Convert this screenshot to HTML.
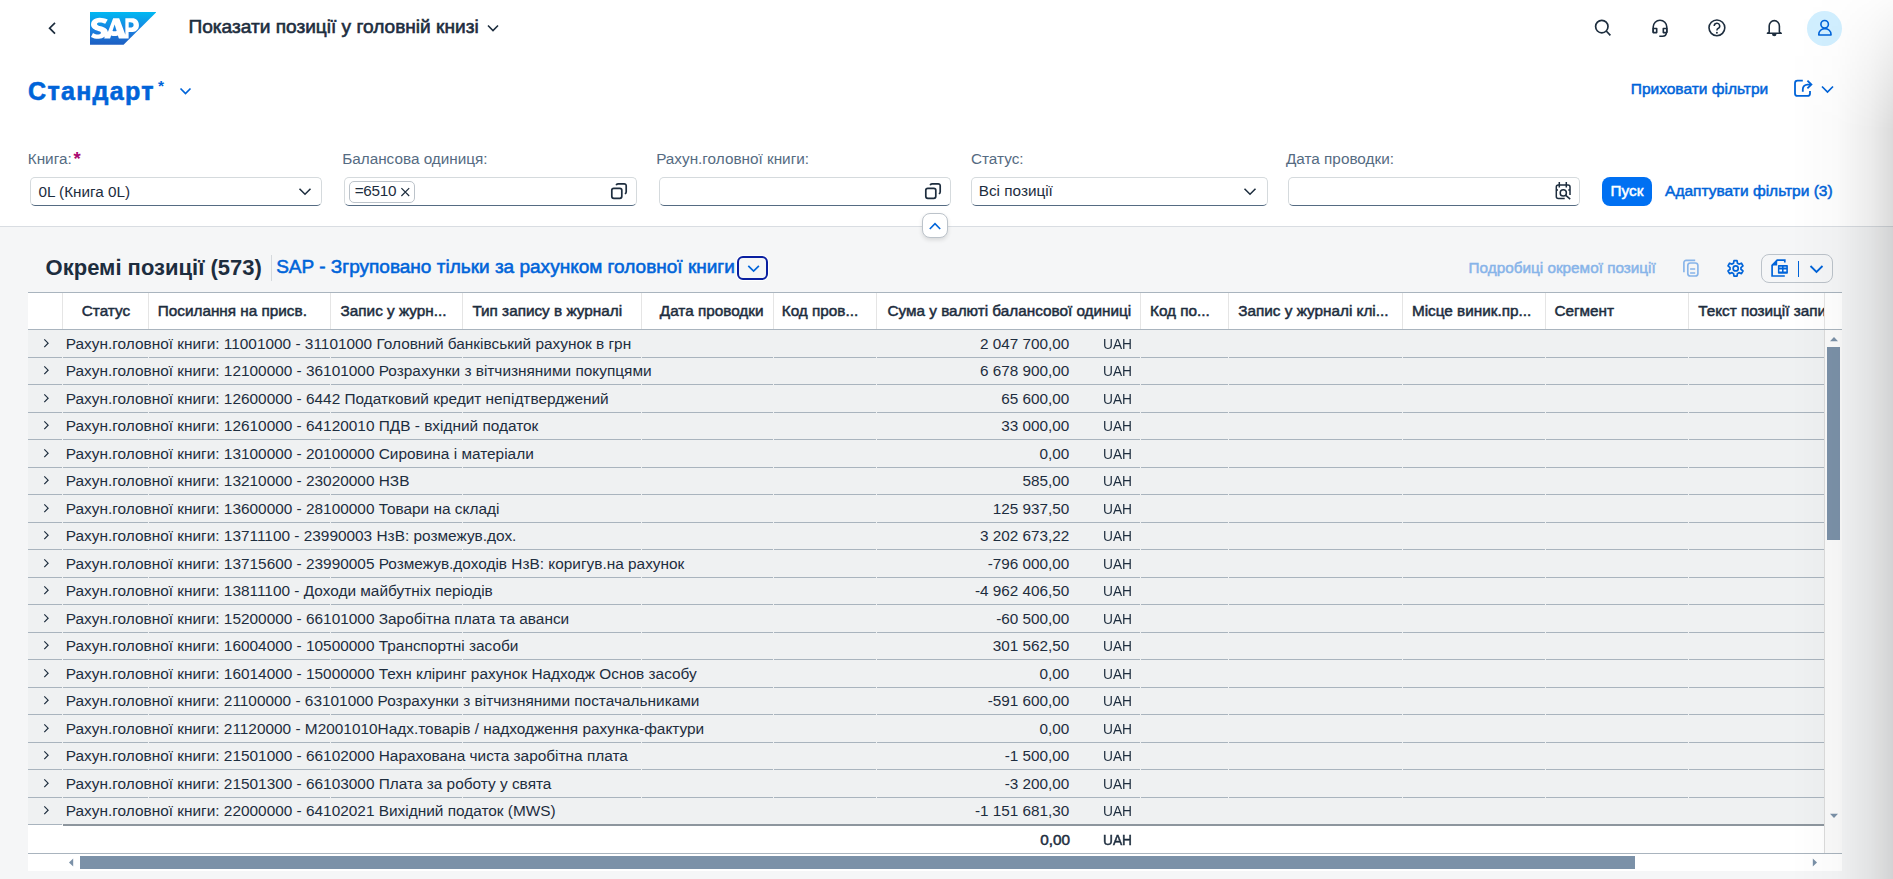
<!DOCTYPE html>
<html><head><meta charset="utf-8"><style>
html,body{margin:0;padding:0;width:1893px;height:879px;overflow:hidden;background:#f5f6f7;font-family:"Liberation Sans",sans-serif;}
.a{position:absolute;}
.t{position:absolute;white-space:nowrap;line-height:1.2;}
.inp{position:absolute;box-sizing:border-box;background:#fff;border:1px solid #d5dadd;border-bottom:1.5px solid #556b82;border-radius:5px;}
#top{position:absolute;left:0;top:0;width:1893px;height:226px;background:#fff;}
</style></head><body>
<div id="top"></div>
<svg class="a" style="left:44px;top:18px" width="16" height="20" viewBox="0 0 16 20"><path d="M11 4.8 L5.6 10.2 L11 15.6" fill="none" stroke="#1d2d3e" stroke-width="1.7"/></svg>
<svg class="a" style="left:90px;top:12px" width="66.4" height="32.7" viewBox="0 0 412.38 204" preserveAspectRatio="none">
<defs><linearGradient id="sg" x1="0" y1="0" x2="0" y2="1"><stop offset="0" stop-color="#00b9f2"/><stop offset="0.55" stop-color="#1a80e0"/><stop offset="1" stop-color="#1d5ec2"/></linearGradient></defs>
<polygon points="0 204 208.41 204 412.38 0 0 0" fill="url(#sg)"/>
<path transform="translate(6 36) scale(1.075 1.067) translate(-5.4 -36.2)" d="M244.73,38.36l-40.6,0v96.53L168.66,38.33H133.5l-30.28,80.73C100,98.76,79,91.69,62.44,86.43,51.5,82.92,39.89,77.75,40,72c.09-4.72,6.22-9.1,18.37-8.45,8.17.44,15.38,1.09,29.7,8l14.1-24.53C89.09,40.370,71,36.21,56.17,36.2h-.09c-17.3,0-31.710,5.6-40.63,14.83A34.23,34.23,0,0,0,5.72,74.7C5.5,86.09,9.67,94.16,18.5,100.66,26,106.15,35.53,109.72,44,112.34c10.43,3.23,18.94,6,18.84,12A8.82,8.82,0,0,1,60.36,130c-2.6,2.68-6.6,3.69-12.12,3.8-10.67.22-18.56-1.45-31.16-8.9L5.41,148.06C18,155.23,31.68,159,47.06,159l3.470,0c13.49-.24,24.4-4.080,33.09-11.14.5-.41,1-.82,1.43-1.25L81.47,157H116l5.81-17.65a63.46,63.46,0,0,0,19.79,3.11,62.41,62.41,0,0,0,19.3-3l5.66,17.56h56.37V120h12.28c29.71,0,47.27-15.11,47.27-40.48C282.46,51.28,265.37,38.36,244.73,38.36ZM141.62,115.48a33.36,33.36,0,0,1-11.86-2.08l12.06-38.07h.23l11.85,38.18A35.28,35.28,0,0,1,141.62,115.48Zm90.16-21.9h-8.39V62.9h8.39c11.17,0,20.09,3.72,20.090,15.1,0,11.78-8.92,15.58-20.09,15.58" fill="#fff" fill-rule="evenodd"/>
</svg>
<div class="t" style="left:188.47px;top:16.46px;font-size:19.1px;font-weight:400;color:#1d2d3e;-webkit-text-stroke:0.6px #1d2d3e;">Показати позиції у головній книзі</div>
<svg class="a" style="left:486px;top:21px" width="14" height="14" viewBox="0 0 14 14"><path d="M2 4.5 L7 9.5 L12 4.5" fill="none" stroke="#1d2d3e" stroke-width="1.6"/></svg>
<svg class="a" style="left:1593px;top:19px" width="20" height="20" viewBox="0 0 20 20"><circle cx="8.8" cy="7.6" r="6.2" fill="none" stroke="#1d2d3e" stroke-width="1.7"/><path d="M13.2 12 L17.4 16.3" stroke="#1d2d3e" stroke-width="1.7"/></svg>
<svg class="a" style="left:1650px;top:17px" width="20" height="22" viewBox="0 0 20 22"><path d="M3.2 15.6 V10 A6.8 6.8 0 0 1 16.8 10 V15.6" fill="none" stroke="#1d2d3e" stroke-width="1.6"/><path d="M3.2 11.5 H6.7 V15.6 H3.2 Z M13.3 11.5 H16.8 V15.6 H13.3 Z" fill="none" stroke="#1d2d3e" stroke-width="1.6" stroke-linejoin="round"/><path d="M16.4 15.8 Q16.2 19.2 12.5 19.3 H9.3" fill="none" stroke="#1d2d3e" stroke-width="1.6"/></svg>
<svg class="a" style="left:1707px;top:18px" width="20" height="20" viewBox="0 0 20 20"><circle cx="9.9" cy="9.85" r="7.9" fill="none" stroke="#1d2d3e" stroke-width="1.6"/><path d="M7.2 8 A2.75 2.75 0 1 1 11 10.5 Q9.9 11 9.9 12.6" fill="none" stroke="#1d2d3e" stroke-width="1.5"/><circle cx="9.9" cy="14.8" r="0.95" fill="#1d2d3e"/></svg>
<svg class="a" style="left:1764px;top:18px" width="21" height="20" viewBox="0 0 21 20"><path d="M5.2 14 V8 A5.1 5.4 0 0 1 15.4 8 V14 L17.2 15.3 H3.4 Z" fill="none" stroke="#1d2d3e" stroke-width="1.6" stroke-linejoin="round"/><path d="M8 15.9 A2.25 2.4 0 0 0 12.5 15.9 Z" fill="#1d2d3e"/></svg>
<div class="a" style="left:1807px;top:11px;width:35px;height:35px;border-radius:50%;background:#d1efff"></div>
<svg class="a" style="left:1814px;top:18px" width="21" height="21" viewBox="0 0 21 21"><circle cx="10.65" cy="6.2" r="3.75" fill="none" stroke="#0064d9" stroke-width="1.6"/><path d="M4.8 17 V16.2 A6.1 5.6 0 0 1 17 16.2 V17 Z" fill="none" stroke="#0064d9" stroke-width="1.6" stroke-linejoin="round"/></svg>
<div class="t" style="left:28.05px;top:75.53px;font-size:25px;font-weight:700;color:#0064d9;-webkit-text-stroke:0.6px #0064d9;letter-spacing:1.3px">Стандарт</div>
<div class="t" style="left:158.00px;top:77.00px;font-size:15.5px;font-weight:700;color:#0064d9;">*</div>
<svg class="a" style="left:178px;top:85px" width="15" height="14" viewBox="0 0 15 14"><path d="M2.5 3.5 L7.5 8.5 L12.5 3.5" fill="none" stroke="#0064d9" stroke-width="1.7"/></svg>
<div class="t" style="left:1630.76px;top:80.20px;font-size:15.5px;font-weight:400;color:#0064d9;-webkit-text-stroke:0.5px #0064d9;">Приховати фільтри</div>
<svg class="a" style="left:1792px;top:79px" width="22" height="19" viewBox="0 0 22 19"><path d="M10.8 1.7 H5.5 A2.5 2.5 0 0 0 3 4.2 V14.4 A2.5 2.5 0 0 0 5.5 16.9 H15.5 A2.5 2.5 0 0 0 18 14.4 V11.9" fill="none" stroke="#0064d9" stroke-width="1.8"/><path d="M10.8 12.8 V10.2 A4.6 4.6 0 0 1 15.4 5.6 H19" fill="none" stroke="#0064d9" stroke-width="1.8"/><path d="M15.4 1.6 L19.4 5.5 L15.4 9.4" fill="none" stroke="#0064d9" stroke-width="1.8"/></svg>
<svg class="a" style="left:1820px;top:83px" width="15" height="14" viewBox="0 0 15 14"><path d="M2 3.5 L7.5 9 L13 3.5" fill="none" stroke="#0064d9" stroke-width="1.7"/></svg>
<div class="t" style="left:27.78px;top:149.79px;font-size:15.3px;font-weight:400;color:#556b82;">Книга:</div>
<div class="t" style="left:342.18px;top:149.79px;font-size:15.3px;font-weight:400;color:#556b82;">Балансова одиниця:</div>
<div class="t" style="left:656.18px;top:149.79px;font-size:15.3px;font-weight:400;color:#556b82;">Рахун.головної книги:</div>
<div class="t" style="left:970.98px;top:149.79px;font-size:15.3px;font-weight:400;color:#556b82;">Статус:</div>
<div class="t" style="left:1285.98px;top:149.79px;font-size:15.3px;font-weight:400;color:#556b82;">Дата проводки:</div>
<div class="t" style="left:73.50px;top:147.83px;font-size:18.5px;font-weight:700;color:#aa0870;">*</div>
<div class="inp" style="left:30px;top:177px;width:292px;height:29px"></div>
<div class="inp" style="left:344px;top:177px;width:293px;height:29px"></div>
<div class="inp" style="left:659px;top:177px;width:292px;height:29px"></div>
<div class="inp" style="left:971px;top:177px;width:297px;height:29px"></div>
<div class="inp" style="left:1288px;top:177px;width:292px;height:29px"></div>
<div class="t" style="left:38.39px;top:182.89px;font-size:15.3px;font-weight:400;color:#1d2d3e;">0L (Книга 0L)</div>
<svg class="a" style="left:297px;top:185px" width="16" height="14" viewBox="0 0 16 14"><path d="M2.5 3.7 L8 9.2 L13.5 3.7" fill="none" stroke="#1d2d3e" stroke-width="1.55"/></svg>
<svg class="a" style="left:1242px;top:185px" width="16" height="14" viewBox="0 0 16 14"><path d="M2.5 3.7 L8 9.2 L13.5 3.7" fill="none" stroke="#1d2d3e" stroke-width="1.55"/></svg>
<div class="t" style="left:978.78px;top:182.39px;font-size:15.3px;font-weight:400;color:#1d2d3e;">Всі позиції</div>
<div class="a" style="left:349.4px;top:181px;width:65.5px;height:22px;border:1px solid #bcc3ca;border-radius:5px;background:#fff;box-sizing:border-box"></div>
<div class="t" style="left:354.74px;top:182.49px;font-size:15.3px;font-weight:400;color:#1d2d3e;letter-spacing:-0.3px">=6510</div>
<svg class="a" style="left:399px;top:186px" width="12" height="12" viewBox="0 0 12 12"><path d="M2.4 2.2 L10.2 10 M10.2 2.2 L2.4 10" stroke="#1d2d3e" stroke-width="1.2"/></svg>
<svg class="a" style="left:610px;top:182px" width="18" height="18" viewBox="0 0 18 18"><rect x="1.8" y="6.3" width="10" height="10" rx="2" fill="none" stroke="#1d2d3e" stroke-width="1.7"/><path d="M6.2 3.2 A2 2 0 0 1 8 1.8 H14.2 A2 2 0 0 1 16.2 3.8 V10 A2 2 0 0 1 14.8 11.8" fill="none" stroke="#1d2d3e" stroke-width="1.7"/></svg>
<svg class="a" style="left:924px;top:182px" width="18" height="18" viewBox="0 0 18 18"><rect x="1.8" y="6.3" width="10" height="10" rx="2" fill="none" stroke="#1d2d3e" stroke-width="1.7"/><path d="M6.2 3.2 A2 2 0 0 1 8 1.8 H14.2 A2 2 0 0 1 16.2 3.8 V10 A2 2 0 0 1 14.8 11.8" fill="none" stroke="#1d2d3e" stroke-width="1.7"/></svg>
<svg class="a" style="left:1553px;top:181px" width="20" height="20" viewBox="0 0 20 20"><path d="M11.7 17.6 H5.3 A2 2 0 0 1 3.3 15.6 V5.9 A2 2 0 0 1 5.3 3.9 H15 A2 2 0 0 1 17 5.9 V13.9" fill="none" stroke="#1d2d3e" stroke-width="1.5"/><path d="M6.3 1 V6.6 M13.3 1 V6.6 M3.3 9 H5 M15.3 9 H17" stroke="#1d2d3e" stroke-width="1.5"/><circle cx="10.3" cy="11.9" r="3.1" fill="none" stroke="#1d2d3e" stroke-width="1.5"/><path d="M12.5 14.1 L17.2 18.1" stroke="#1d2d3e" stroke-width="1.5"/></svg>
<div class="a" style="left:1602px;top:177px;width:50px;height:29px;border-radius:8px;background:#0070f2"></div>
<div class="t" style="left:1610.58px;top:181.89px;font-size:15.3px;font-weight:400;color:#fff;-webkit-text-stroke:0.5px #fff;">Пуск</div>
<div class="t" style="left:1665.09px;top:181.70px;font-size:15.5px;font-weight:400;color:#0064d9;-webkit-text-stroke:0.5px #0064d9;">Адаптувати фільтри (3)</div>
<div class="a" style="left:0px;top:226px;width:1893px;height:1px;background:#d9dde2;"></div>
<div class="a" style="left:922px;top:213px;width:26px;height:25px;border-radius:8px;background:#fff;border:1px solid #bcc3ca;box-sizing:border-box;box-shadow:0 2px 4px rgba(0,0,0,0.12)"></div>
<svg class="a" style="left:927px;top:219px" width="16" height="12" viewBox="0 0 16 12"><path d="M2.8 10 L8 4.6 L13.2 10" fill="none" stroke="#0064d9" stroke-width="1.6"/></svg>
<div class="t" style="left:45.62px;top:255.29px;font-size:22px;font-weight:700;color:#1d2d3e;">Окремі позиції (573)</div>
<div class="a" style="left:271px;top:255px;width:1px;height:26px;background:#d5d9dd;"></div>
<div class="t" style="left:276.15px;top:256.33px;font-size:19.03px;font-weight:400;color:#0064d9;-webkit-text-stroke:0.55px #0064d9;">SAP - Згруповано тільки за рахунком головної книги</div>
<div class="a" style="left:736px;top:255px;width:33px;height:26px;border-radius:7px;border:2px solid #fff;box-sizing:border-box"></div>
<div class="a" style="left:737px;top:256px;width:31px;height:24px;border-radius:6px;border:2px solid #0a1fa0;box-sizing:border-box"></div>
<svg class="a" style="left:745.5px;top:261.5px" width="15" height="14" viewBox="0 0 15 14"><path d="M2.3 3.8 L7.6 9 L12.9 3.8" fill="none" stroke="#0064d9" stroke-width="1.7"/></svg>
<div class="t" style="left:1468.58px;top:258.59px;font-size:15.3px;font-weight:400;color:#87b4e9;-webkit-text-stroke:0.5px #87b4e9;">Подробиці окремої позиції</div>
<svg class="a" style="left:1682px;top:258px" width="19" height="20" viewBox="0 0 19 20"><path d="M1.9 14.2 V4.6 A2.3 2.3 0 0 1 4.2 2.3 H13.2" fill="none" stroke="#87b4e9" stroke-width="1.65"/><rect x="5.8" y="5" width="10.1" height="13" rx="2.6" fill="none" stroke="#87b4e9" stroke-width="1.65"/><path d="M8.1 11 H13.2 M8.1 15 H13.2" stroke="#87b4e9" stroke-width="1.65"/></svg>
<svg class="a" style="left:1726px;top:258px" width="19" height="20" viewBox="0 0 19 20"><path d="M6.75 5.64 L7.53 5.27 L7.99 2.65 L11.01 2.65 L11.47 5.27 L12.25 5.64 L12.96 6.13 L15.46 5.22 L16.97 7.83 L14.93 9.54 L15.00 10.40 L14.93 11.26 L16.97 12.97 L15.46 15.58 L12.96 14.67 L12.25 15.16 L11.47 15.53 L11.01 18.15 L7.99 18.15 L7.53 15.53 L6.75 15.16 L6.04 14.67 L3.54 15.58 L2.03 12.97 L4.07 11.26 L4.00 10.40 L4.07 9.54 L2.03 7.83 L3.54 5.22 L6.04 6.13 Z" fill="none" stroke="#0064d9" stroke-width="1.7" stroke-linejoin="round"/><circle cx="9.7" cy="10.4" r="2.55" fill="none" stroke="#0064d9" stroke-width="1.7"/></svg>
<div class="a" style="left:1761px;top:254px;width:72px;height:29px;border-radius:8px;border:1px solid #bcc3ca;box-sizing:border-box"></div>
<svg class="a" style="left:1770px;top:258px" width="20" height="20" viewBox="0 0 20 20"><path d="M14.8 4.4 V2.1 H7.2 L2.1 7.4 V18 H14.8" fill="none" stroke="#0064d9" stroke-width="1.7"/><path d="M2.1 7.4 L7.2 2.1 V7.4 Z" fill="#0064d9"/><rect x="7.9" y="6.9" width="10" height="8.9" rx="0.8" fill="#0064d9"/><path d="M9.4 8.8 H12 V9.6 H9.4 Z M13.6 8.8 H16.3 V9.6 H13.6 Z M9.4 11.6 H12 V13.4 H9.4 Z M13.6 11.6 H16.3 V13.4 H13.6 Z" fill="#fff"/></svg>
<div class="a" style="left:1797.9px;top:261px;width:1.2px;height:16px;background:#0064d9;"></div>
<svg class="a" style="left:1809px;top:262px" width="15" height="14" viewBox="0 0 15 14"><path d="M1.5 4 L7.5 10 L13.5 4" fill="none" stroke="#0064d9" stroke-width="1.8"/></svg>
<div class="a" style="left:28px;top:292px;width:1814px;height:579px;background:#fff;"></div>
<div class="a" style="left:28px;top:292px;width:1814px;height:1px;background:#a9b4be;"></div>
<div class="a" style="left:28px;top:329px;width:1814px;height:1px;background:#a9b4be;"></div>
<div class="a" style="left:62px;top:293px;width:1px;height:36px;background:#e5e5e5;"></div>
<div class="a" style="left:148px;top:293px;width:1px;height:36px;background:#e5e5e5;"></div>
<div class="a" style="left:330px;top:293px;width:1px;height:36px;background:#e5e5e5;"></div>
<div class="a" style="left:462px;top:293px;width:1px;height:36px;background:#e5e5e5;"></div>
<div class="a" style="left:641px;top:293px;width:1px;height:36px;background:#e5e5e5;"></div>
<div class="a" style="left:773px;top:293px;width:1px;height:36px;background:#e5e5e5;"></div>
<div class="a" style="left:876px;top:293px;width:1px;height:36px;background:#e5e5e5;"></div>
<div class="a" style="left:1140px;top:293px;width:1px;height:36px;background:#e5e5e5;"></div>
<div class="a" style="left:1228px;top:293px;width:1px;height:36px;background:#e5e5e5;"></div>
<div class="a" style="left:1402px;top:293px;width:1px;height:36px;background:#e5e5e5;"></div>
<div class="a" style="left:1545px;top:293px;width:1px;height:36px;background:#e5e5e5;"></div>
<div class="a" style="left:1688px;top:293px;width:1px;height:36px;background:#e5e5e5;"></div>
<div class="a" style="left:1824px;top:293px;width:1px;height:36px;background:#e5e5e5;"></div>
<div class="a" style="left:0;top:0;width:1893px;height:879px;clip-path:inset(293px 69px 550px 0)">
<div class="t" style="left:81.78px;top:302.19px;font-size:15.3px;font-weight:400;color:#1d2d3e;-webkit-text-stroke:0.5px #1d2d3e;">Статус</div>
<div class="t" style="left:157.78px;top:302.19px;font-size:15.3px;font-weight:400;color:#1d2d3e;-webkit-text-stroke:0.5px #1d2d3e;">Посилання на присв.</div>
<div class="t" style="left:340.58px;top:302.19px;font-size:15.3px;font-weight:400;color:#1d2d3e;-webkit-text-stroke:0.5px #1d2d3e;">Запис у журн...</div>
<div class="t" style="left:472.38px;top:302.19px;font-size:15.3px;font-weight:400;color:#1d2d3e;-webkit-text-stroke:0.5px #1d2d3e;">Тип запису в журналі</div>
<div class="t" style="left:659.78px;top:302.19px;font-size:15.3px;font-weight:400;color:#1d2d3e;-webkit-text-stroke:0.5px #1d2d3e;">Дата проводки</div>
<div class="t" style="left:781.78px;top:302.19px;font-size:15.3px;font-weight:400;color:#1d2d3e;-webkit-text-stroke:0.5px #1d2d3e;">Код пров...</div>
<div class="t" style="left:887.48px;top:302.19px;font-size:15.3px;font-weight:400;color:#1d2d3e;-webkit-text-stroke:0.5px #1d2d3e;">Сума у валюті балансової одиниці</div>
<div class="t" style="left:1149.98px;top:302.19px;font-size:15.3px;font-weight:400;color:#1d2d3e;-webkit-text-stroke:0.5px #1d2d3e;">Код по...</div>
<div class="t" style="left:1238.28px;top:302.19px;font-size:15.3px;font-weight:400;color:#1d2d3e;-webkit-text-stroke:0.5px #1d2d3e;">Запис у журналі клі...</div>
<div class="t" style="left:1411.98px;top:302.19px;font-size:15.3px;font-weight:400;color:#1d2d3e;-webkit-text-stroke:0.5px #1d2d3e;">Місце виник.пр...</div>
<div class="t" style="left:1554.38px;top:302.19px;font-size:15.3px;font-weight:400;color:#1d2d3e;-webkit-text-stroke:0.5px #1d2d3e;">Сегмент</div>
<div class="t" style="left:1698.18px;top:302.19px;font-size:15.3px;font-weight:400;color:#1d2d3e;-webkit-text-stroke:0.5px #1d2d3e;">Текст позиції записів</div>
</div>
<div class="a" style="left:0;top:0;width:1893px;height:879px;clip-path:inset(0 69px 0 0)">
<div class="a" style="left:28px;top:330.10px;width:1796px;height:27.52px;background:#eff1f2;"></div>
<div class="a" style="left:28px;top:356.52px;width:34px;height:1px;background:#a9b4be;"></div>
<div class="a" style="left:63px;top:356.52px;width:85px;height:1px;background:#a9b4be;"></div>
<div class="a" style="left:149px;top:356.52px;width:181px;height:1px;background:#a9b4be;"></div>
<div class="a" style="left:331px;top:356.52px;width:131px;height:1px;background:#a9b4be;"></div>
<div class="a" style="left:463px;top:356.52px;width:178px;height:1px;background:#a9b4be;"></div>
<div class="a" style="left:642px;top:356.52px;width:131px;height:1px;background:#a9b4be;"></div>
<div class="a" style="left:774px;top:356.52px;width:102px;height:1px;background:#a9b4be;"></div>
<div class="a" style="left:877px;top:356.52px;width:263px;height:1px;background:#a9b4be;"></div>
<div class="a" style="left:1141px;top:356.52px;width:87px;height:1px;background:#a9b4be;"></div>
<div class="a" style="left:1229px;top:356.52px;width:173px;height:1px;background:#a9b4be;"></div>
<div class="a" style="left:1403px;top:356.52px;width:142px;height:1px;background:#a9b4be;"></div>
<div class="a" style="left:1546px;top:356.52px;width:142px;height:1px;background:#a9b4be;"></div>
<div class="a" style="left:1689px;top:356.52px;width:135px;height:1px;background:#a9b4be;"></div>
<svg class="a" style="left:40px;top:335.60px" width="12" height="16" viewBox="0 0 12 16"><path d="M4.3 3.3 L8.1 7.2 L4.3 11.1" fill="none" stroke="#1d2d3e" stroke-width="1.2"/></svg>
<div class="t" style="left:65.77px;top:334.69px;font-size:15.4px;font-weight:400;color:#1d2d3e;">Рахун.головної книги: 11001000 - 31101000 Головний банківський рахунок в грн</div>
<div class="t" style="right:823.70px;top:334.79px;font-size:15.3px;font-weight:400;color:#1d2d3e;">2 047 700,00</div>
<div class="t" style="left:1103.09px;top:334.79px;font-size:15.3px;font-weight:400;color:#1d2d3e;"><span style="display:inline-block;transform:scaleX(0.9);transform-origin:0 0">UAH</span></div>
<div class="a" style="left:28px;top:357.62px;width:1796px;height:27.52px;background:#eff1f2;"></div>
<div class="a" style="left:28px;top:384.04px;width:34px;height:1px;background:#a9b4be;"></div>
<div class="a" style="left:63px;top:384.04px;width:85px;height:1px;background:#a9b4be;"></div>
<div class="a" style="left:149px;top:384.04px;width:181px;height:1px;background:#a9b4be;"></div>
<div class="a" style="left:331px;top:384.04px;width:131px;height:1px;background:#a9b4be;"></div>
<div class="a" style="left:463px;top:384.04px;width:178px;height:1px;background:#a9b4be;"></div>
<div class="a" style="left:642px;top:384.04px;width:131px;height:1px;background:#a9b4be;"></div>
<div class="a" style="left:774px;top:384.04px;width:102px;height:1px;background:#a9b4be;"></div>
<div class="a" style="left:877px;top:384.04px;width:263px;height:1px;background:#a9b4be;"></div>
<div class="a" style="left:1141px;top:384.04px;width:87px;height:1px;background:#a9b4be;"></div>
<div class="a" style="left:1229px;top:384.04px;width:173px;height:1px;background:#a9b4be;"></div>
<div class="a" style="left:1403px;top:384.04px;width:142px;height:1px;background:#a9b4be;"></div>
<div class="a" style="left:1546px;top:384.04px;width:142px;height:1px;background:#a9b4be;"></div>
<div class="a" style="left:1689px;top:384.04px;width:135px;height:1px;background:#a9b4be;"></div>
<svg class="a" style="left:40px;top:363.12px" width="12" height="16" viewBox="0 0 12 16"><path d="M4.3 3.3 L8.1 7.2 L4.3 11.1" fill="none" stroke="#1d2d3e" stroke-width="1.2"/></svg>
<div class="t" style="left:65.77px;top:362.18px;font-size:15.4px;font-weight:400;color:#1d2d3e;">Рахун.головної книги: 12100000 - 36101000 Розрахунки з вітчизняними покупцями</div>
<div class="t" style="right:823.70px;top:362.28px;font-size:15.3px;font-weight:400;color:#1d2d3e;">6 678 900,00</div>
<div class="t" style="left:1103.09px;top:362.28px;font-size:15.3px;font-weight:400;color:#1d2d3e;"><span style="display:inline-block;transform:scaleX(0.9);transform-origin:0 0">UAH</span></div>
<div class="a" style="left:28px;top:385.14px;width:1796px;height:27.52px;background:#eff1f2;"></div>
<div class="a" style="left:28px;top:411.56px;width:34px;height:1px;background:#a9b4be;"></div>
<div class="a" style="left:63px;top:411.56px;width:85px;height:1px;background:#a9b4be;"></div>
<div class="a" style="left:149px;top:411.56px;width:181px;height:1px;background:#a9b4be;"></div>
<div class="a" style="left:331px;top:411.56px;width:131px;height:1px;background:#a9b4be;"></div>
<div class="a" style="left:463px;top:411.56px;width:178px;height:1px;background:#a9b4be;"></div>
<div class="a" style="left:642px;top:411.56px;width:131px;height:1px;background:#a9b4be;"></div>
<div class="a" style="left:774px;top:411.56px;width:102px;height:1px;background:#a9b4be;"></div>
<div class="a" style="left:877px;top:411.56px;width:263px;height:1px;background:#a9b4be;"></div>
<div class="a" style="left:1141px;top:411.56px;width:87px;height:1px;background:#a9b4be;"></div>
<div class="a" style="left:1229px;top:411.56px;width:173px;height:1px;background:#a9b4be;"></div>
<div class="a" style="left:1403px;top:411.56px;width:142px;height:1px;background:#a9b4be;"></div>
<div class="a" style="left:1546px;top:411.56px;width:142px;height:1px;background:#a9b4be;"></div>
<div class="a" style="left:1689px;top:411.56px;width:135px;height:1px;background:#a9b4be;"></div>
<svg class="a" style="left:40px;top:390.64px" width="12" height="16" viewBox="0 0 12 16"><path d="M4.3 3.3 L8.1 7.2 L4.3 11.1" fill="none" stroke="#1d2d3e" stroke-width="1.2"/></svg>
<div class="t" style="left:65.77px;top:389.67px;font-size:15.4px;font-weight:400;color:#1d2d3e;">Рахун.головної книги: 12600000 - 6442 Податковий кредит непідтверджений</div>
<div class="t" style="right:823.70px;top:389.77px;font-size:15.3px;font-weight:400;color:#1d2d3e;">65 600,00</div>
<div class="t" style="left:1103.09px;top:389.77px;font-size:15.3px;font-weight:400;color:#1d2d3e;"><span style="display:inline-block;transform:scaleX(0.9);transform-origin:0 0">UAH</span></div>
<div class="a" style="left:28px;top:412.66px;width:1796px;height:27.52px;background:#eff1f2;"></div>
<div class="a" style="left:28px;top:439.08px;width:34px;height:1px;background:#a9b4be;"></div>
<div class="a" style="left:63px;top:439.08px;width:85px;height:1px;background:#a9b4be;"></div>
<div class="a" style="left:149px;top:439.08px;width:181px;height:1px;background:#a9b4be;"></div>
<div class="a" style="left:331px;top:439.08px;width:131px;height:1px;background:#a9b4be;"></div>
<div class="a" style="left:463px;top:439.08px;width:178px;height:1px;background:#a9b4be;"></div>
<div class="a" style="left:642px;top:439.08px;width:131px;height:1px;background:#a9b4be;"></div>
<div class="a" style="left:774px;top:439.08px;width:102px;height:1px;background:#a9b4be;"></div>
<div class="a" style="left:877px;top:439.08px;width:263px;height:1px;background:#a9b4be;"></div>
<div class="a" style="left:1141px;top:439.08px;width:87px;height:1px;background:#a9b4be;"></div>
<div class="a" style="left:1229px;top:439.08px;width:173px;height:1px;background:#a9b4be;"></div>
<div class="a" style="left:1403px;top:439.08px;width:142px;height:1px;background:#a9b4be;"></div>
<div class="a" style="left:1546px;top:439.08px;width:142px;height:1px;background:#a9b4be;"></div>
<div class="a" style="left:1689px;top:439.08px;width:135px;height:1px;background:#a9b4be;"></div>
<svg class="a" style="left:40px;top:418.16px" width="12" height="16" viewBox="0 0 12 16"><path d="M4.3 3.3 L8.1 7.2 L4.3 11.1" fill="none" stroke="#1d2d3e" stroke-width="1.2"/></svg>
<div class="t" style="left:65.77px;top:417.16px;font-size:15.4px;font-weight:400;color:#1d2d3e;">Рахун.головної книги: 12610000 - 64120010 ПДВ - вхідний податок</div>
<div class="t" style="right:823.70px;top:417.26px;font-size:15.3px;font-weight:400;color:#1d2d3e;">33 000,00</div>
<div class="t" style="left:1103.09px;top:417.26px;font-size:15.3px;font-weight:400;color:#1d2d3e;"><span style="display:inline-block;transform:scaleX(0.9);transform-origin:0 0">UAH</span></div>
<div class="a" style="left:28px;top:440.18px;width:1796px;height:27.52px;background:#eff1f2;"></div>
<div class="a" style="left:28px;top:466.60px;width:34px;height:1px;background:#a9b4be;"></div>
<div class="a" style="left:63px;top:466.60px;width:85px;height:1px;background:#a9b4be;"></div>
<div class="a" style="left:149px;top:466.60px;width:181px;height:1px;background:#a9b4be;"></div>
<div class="a" style="left:331px;top:466.60px;width:131px;height:1px;background:#a9b4be;"></div>
<div class="a" style="left:463px;top:466.60px;width:178px;height:1px;background:#a9b4be;"></div>
<div class="a" style="left:642px;top:466.60px;width:131px;height:1px;background:#a9b4be;"></div>
<div class="a" style="left:774px;top:466.60px;width:102px;height:1px;background:#a9b4be;"></div>
<div class="a" style="left:877px;top:466.60px;width:263px;height:1px;background:#a9b4be;"></div>
<div class="a" style="left:1141px;top:466.60px;width:87px;height:1px;background:#a9b4be;"></div>
<div class="a" style="left:1229px;top:466.60px;width:173px;height:1px;background:#a9b4be;"></div>
<div class="a" style="left:1403px;top:466.60px;width:142px;height:1px;background:#a9b4be;"></div>
<div class="a" style="left:1546px;top:466.60px;width:142px;height:1px;background:#a9b4be;"></div>
<div class="a" style="left:1689px;top:466.60px;width:135px;height:1px;background:#a9b4be;"></div>
<svg class="a" style="left:40px;top:445.68px" width="12" height="16" viewBox="0 0 12 16"><path d="M4.3 3.3 L8.1 7.2 L4.3 11.1" fill="none" stroke="#1d2d3e" stroke-width="1.2"/></svg>
<div class="t" style="left:65.77px;top:444.65px;font-size:15.4px;font-weight:400;color:#1d2d3e;">Рахун.головної книги: 13100000 - 20100000 Сировина і матеріали</div>
<div class="t" style="right:823.70px;top:444.75px;font-size:15.3px;font-weight:400;color:#1d2d3e;">0,00</div>
<div class="t" style="left:1103.09px;top:444.75px;font-size:15.3px;font-weight:400;color:#1d2d3e;"><span style="display:inline-block;transform:scaleX(0.9);transform-origin:0 0">UAH</span></div>
<div class="a" style="left:28px;top:467.70px;width:1796px;height:27.52px;background:#eff1f2;"></div>
<div class="a" style="left:28px;top:494.12px;width:34px;height:1px;background:#a9b4be;"></div>
<div class="a" style="left:63px;top:494.12px;width:85px;height:1px;background:#a9b4be;"></div>
<div class="a" style="left:149px;top:494.12px;width:181px;height:1px;background:#a9b4be;"></div>
<div class="a" style="left:331px;top:494.12px;width:131px;height:1px;background:#a9b4be;"></div>
<div class="a" style="left:463px;top:494.12px;width:178px;height:1px;background:#a9b4be;"></div>
<div class="a" style="left:642px;top:494.12px;width:131px;height:1px;background:#a9b4be;"></div>
<div class="a" style="left:774px;top:494.12px;width:102px;height:1px;background:#a9b4be;"></div>
<div class="a" style="left:877px;top:494.12px;width:263px;height:1px;background:#a9b4be;"></div>
<div class="a" style="left:1141px;top:494.12px;width:87px;height:1px;background:#a9b4be;"></div>
<div class="a" style="left:1229px;top:494.12px;width:173px;height:1px;background:#a9b4be;"></div>
<div class="a" style="left:1403px;top:494.12px;width:142px;height:1px;background:#a9b4be;"></div>
<div class="a" style="left:1546px;top:494.12px;width:142px;height:1px;background:#a9b4be;"></div>
<div class="a" style="left:1689px;top:494.12px;width:135px;height:1px;background:#a9b4be;"></div>
<svg class="a" style="left:40px;top:473.20px" width="12" height="16" viewBox="0 0 12 16"><path d="M4.3 3.3 L8.1 7.2 L4.3 11.1" fill="none" stroke="#1d2d3e" stroke-width="1.2"/></svg>
<div class="t" style="left:65.77px;top:472.14px;font-size:15.4px;font-weight:400;color:#1d2d3e;">Рахун.головної книги: 13210000 - 23020000 НЗВ</div>
<div class="t" style="right:823.70px;top:472.24px;font-size:15.3px;font-weight:400;color:#1d2d3e;">585,00</div>
<div class="t" style="left:1103.09px;top:472.24px;font-size:15.3px;font-weight:400;color:#1d2d3e;"><span style="display:inline-block;transform:scaleX(0.9);transform-origin:0 0">UAH</span></div>
<div class="a" style="left:28px;top:495.22px;width:1796px;height:27.52px;background:#eff1f2;"></div>
<div class="a" style="left:28px;top:521.64px;width:34px;height:1px;background:#a9b4be;"></div>
<div class="a" style="left:63px;top:521.64px;width:85px;height:1px;background:#a9b4be;"></div>
<div class="a" style="left:149px;top:521.64px;width:181px;height:1px;background:#a9b4be;"></div>
<div class="a" style="left:331px;top:521.64px;width:131px;height:1px;background:#a9b4be;"></div>
<div class="a" style="left:463px;top:521.64px;width:178px;height:1px;background:#a9b4be;"></div>
<div class="a" style="left:642px;top:521.64px;width:131px;height:1px;background:#a9b4be;"></div>
<div class="a" style="left:774px;top:521.64px;width:102px;height:1px;background:#a9b4be;"></div>
<div class="a" style="left:877px;top:521.64px;width:263px;height:1px;background:#a9b4be;"></div>
<div class="a" style="left:1141px;top:521.64px;width:87px;height:1px;background:#a9b4be;"></div>
<div class="a" style="left:1229px;top:521.64px;width:173px;height:1px;background:#a9b4be;"></div>
<div class="a" style="left:1403px;top:521.64px;width:142px;height:1px;background:#a9b4be;"></div>
<div class="a" style="left:1546px;top:521.64px;width:142px;height:1px;background:#a9b4be;"></div>
<div class="a" style="left:1689px;top:521.64px;width:135px;height:1px;background:#a9b4be;"></div>
<svg class="a" style="left:40px;top:500.72px" width="12" height="16" viewBox="0 0 12 16"><path d="M4.3 3.3 L8.1 7.2 L4.3 11.1" fill="none" stroke="#1d2d3e" stroke-width="1.2"/></svg>
<div class="t" style="left:65.77px;top:499.63px;font-size:15.4px;font-weight:400;color:#1d2d3e;">Рахун.головної книги: 13600000 - 28100000 Товари на складі</div>
<div class="t" style="right:823.70px;top:499.73px;font-size:15.3px;font-weight:400;color:#1d2d3e;">125 937,50</div>
<div class="t" style="left:1103.09px;top:499.73px;font-size:15.3px;font-weight:400;color:#1d2d3e;"><span style="display:inline-block;transform:scaleX(0.9);transform-origin:0 0">UAH</span></div>
<div class="a" style="left:28px;top:522.74px;width:1796px;height:27.52px;background:#eff1f2;"></div>
<div class="a" style="left:28px;top:549.16px;width:34px;height:1px;background:#a9b4be;"></div>
<div class="a" style="left:63px;top:549.16px;width:85px;height:1px;background:#a9b4be;"></div>
<div class="a" style="left:149px;top:549.16px;width:181px;height:1px;background:#a9b4be;"></div>
<div class="a" style="left:331px;top:549.16px;width:131px;height:1px;background:#a9b4be;"></div>
<div class="a" style="left:463px;top:549.16px;width:178px;height:1px;background:#a9b4be;"></div>
<div class="a" style="left:642px;top:549.16px;width:131px;height:1px;background:#a9b4be;"></div>
<div class="a" style="left:774px;top:549.16px;width:102px;height:1px;background:#a9b4be;"></div>
<div class="a" style="left:877px;top:549.16px;width:263px;height:1px;background:#a9b4be;"></div>
<div class="a" style="left:1141px;top:549.16px;width:87px;height:1px;background:#a9b4be;"></div>
<div class="a" style="left:1229px;top:549.16px;width:173px;height:1px;background:#a9b4be;"></div>
<div class="a" style="left:1403px;top:549.16px;width:142px;height:1px;background:#a9b4be;"></div>
<div class="a" style="left:1546px;top:549.16px;width:142px;height:1px;background:#a9b4be;"></div>
<div class="a" style="left:1689px;top:549.16px;width:135px;height:1px;background:#a9b4be;"></div>
<svg class="a" style="left:40px;top:528.24px" width="12" height="16" viewBox="0 0 12 16"><path d="M4.3 3.3 L8.1 7.2 L4.3 11.1" fill="none" stroke="#1d2d3e" stroke-width="1.2"/></svg>
<div class="t" style="left:65.77px;top:527.12px;font-size:15.4px;font-weight:400;color:#1d2d3e;">Рахун.головної книги: 13711100 - 23990003 НзВ: розмежув.дох.</div>
<div class="t" style="right:823.70px;top:527.22px;font-size:15.3px;font-weight:400;color:#1d2d3e;">3 202 673,22</div>
<div class="t" style="left:1103.09px;top:527.22px;font-size:15.3px;font-weight:400;color:#1d2d3e;"><span style="display:inline-block;transform:scaleX(0.9);transform-origin:0 0">UAH</span></div>
<div class="a" style="left:28px;top:550.26px;width:1796px;height:27.52px;background:#eff1f2;"></div>
<div class="a" style="left:28px;top:576.68px;width:34px;height:1px;background:#a9b4be;"></div>
<div class="a" style="left:63px;top:576.68px;width:85px;height:1px;background:#a9b4be;"></div>
<div class="a" style="left:149px;top:576.68px;width:181px;height:1px;background:#a9b4be;"></div>
<div class="a" style="left:331px;top:576.68px;width:131px;height:1px;background:#a9b4be;"></div>
<div class="a" style="left:463px;top:576.68px;width:178px;height:1px;background:#a9b4be;"></div>
<div class="a" style="left:642px;top:576.68px;width:131px;height:1px;background:#a9b4be;"></div>
<div class="a" style="left:774px;top:576.68px;width:102px;height:1px;background:#a9b4be;"></div>
<div class="a" style="left:877px;top:576.68px;width:263px;height:1px;background:#a9b4be;"></div>
<div class="a" style="left:1141px;top:576.68px;width:87px;height:1px;background:#a9b4be;"></div>
<div class="a" style="left:1229px;top:576.68px;width:173px;height:1px;background:#a9b4be;"></div>
<div class="a" style="left:1403px;top:576.68px;width:142px;height:1px;background:#a9b4be;"></div>
<div class="a" style="left:1546px;top:576.68px;width:142px;height:1px;background:#a9b4be;"></div>
<div class="a" style="left:1689px;top:576.68px;width:135px;height:1px;background:#a9b4be;"></div>
<svg class="a" style="left:40px;top:555.76px" width="12" height="16" viewBox="0 0 12 16"><path d="M4.3 3.3 L8.1 7.2 L4.3 11.1" fill="none" stroke="#1d2d3e" stroke-width="1.2"/></svg>
<div class="t" style="left:65.77px;top:554.61px;font-size:15.4px;font-weight:400;color:#1d2d3e;">Рахун.головної книги: 13715600 - 23990005 Розмежув.доходів НзВ: коригув.на рахунок</div>
<div class="t" style="right:823.70px;top:554.71px;font-size:15.3px;font-weight:400;color:#1d2d3e;">-796 000,00</div>
<div class="t" style="left:1103.09px;top:554.71px;font-size:15.3px;font-weight:400;color:#1d2d3e;"><span style="display:inline-block;transform:scaleX(0.9);transform-origin:0 0">UAH</span></div>
<div class="a" style="left:28px;top:577.78px;width:1796px;height:27.52px;background:#eff1f2;"></div>
<div class="a" style="left:28px;top:604.20px;width:34px;height:1px;background:#a9b4be;"></div>
<div class="a" style="left:63px;top:604.20px;width:85px;height:1px;background:#a9b4be;"></div>
<div class="a" style="left:149px;top:604.20px;width:181px;height:1px;background:#a9b4be;"></div>
<div class="a" style="left:331px;top:604.20px;width:131px;height:1px;background:#a9b4be;"></div>
<div class="a" style="left:463px;top:604.20px;width:178px;height:1px;background:#a9b4be;"></div>
<div class="a" style="left:642px;top:604.20px;width:131px;height:1px;background:#a9b4be;"></div>
<div class="a" style="left:774px;top:604.20px;width:102px;height:1px;background:#a9b4be;"></div>
<div class="a" style="left:877px;top:604.20px;width:263px;height:1px;background:#a9b4be;"></div>
<div class="a" style="left:1141px;top:604.20px;width:87px;height:1px;background:#a9b4be;"></div>
<div class="a" style="left:1229px;top:604.20px;width:173px;height:1px;background:#a9b4be;"></div>
<div class="a" style="left:1403px;top:604.20px;width:142px;height:1px;background:#a9b4be;"></div>
<div class="a" style="left:1546px;top:604.20px;width:142px;height:1px;background:#a9b4be;"></div>
<div class="a" style="left:1689px;top:604.20px;width:135px;height:1px;background:#a9b4be;"></div>
<svg class="a" style="left:40px;top:583.28px" width="12" height="16" viewBox="0 0 12 16"><path d="M4.3 3.3 L8.1 7.2 L4.3 11.1" fill="none" stroke="#1d2d3e" stroke-width="1.2"/></svg>
<div class="t" style="left:65.77px;top:582.10px;font-size:15.4px;font-weight:400;color:#1d2d3e;">Рахун.головної книги: 13811100 - Доходи майбутніх періодів</div>
<div class="t" style="right:823.70px;top:582.20px;font-size:15.3px;font-weight:400;color:#1d2d3e;">-4 962 406,50</div>
<div class="t" style="left:1103.09px;top:582.20px;font-size:15.3px;font-weight:400;color:#1d2d3e;"><span style="display:inline-block;transform:scaleX(0.9);transform-origin:0 0">UAH</span></div>
<div class="a" style="left:28px;top:605.30px;width:1796px;height:27.52px;background:#eff1f2;"></div>
<div class="a" style="left:28px;top:631.72px;width:34px;height:1px;background:#a9b4be;"></div>
<div class="a" style="left:63px;top:631.72px;width:85px;height:1px;background:#a9b4be;"></div>
<div class="a" style="left:149px;top:631.72px;width:181px;height:1px;background:#a9b4be;"></div>
<div class="a" style="left:331px;top:631.72px;width:131px;height:1px;background:#a9b4be;"></div>
<div class="a" style="left:463px;top:631.72px;width:178px;height:1px;background:#a9b4be;"></div>
<div class="a" style="left:642px;top:631.72px;width:131px;height:1px;background:#a9b4be;"></div>
<div class="a" style="left:774px;top:631.72px;width:102px;height:1px;background:#a9b4be;"></div>
<div class="a" style="left:877px;top:631.72px;width:263px;height:1px;background:#a9b4be;"></div>
<div class="a" style="left:1141px;top:631.72px;width:87px;height:1px;background:#a9b4be;"></div>
<div class="a" style="left:1229px;top:631.72px;width:173px;height:1px;background:#a9b4be;"></div>
<div class="a" style="left:1403px;top:631.72px;width:142px;height:1px;background:#a9b4be;"></div>
<div class="a" style="left:1546px;top:631.72px;width:142px;height:1px;background:#a9b4be;"></div>
<div class="a" style="left:1689px;top:631.72px;width:135px;height:1px;background:#a9b4be;"></div>
<svg class="a" style="left:40px;top:610.80px" width="12" height="16" viewBox="0 0 12 16"><path d="M4.3 3.3 L8.1 7.2 L4.3 11.1" fill="none" stroke="#1d2d3e" stroke-width="1.2"/></svg>
<div class="t" style="left:65.77px;top:609.59px;font-size:15.4px;font-weight:400;color:#1d2d3e;">Рахун.головної книги: 15200000 - 66101000 Заробітна плата та аванси</div>
<div class="t" style="right:823.70px;top:609.69px;font-size:15.3px;font-weight:400;color:#1d2d3e;">-60 500,00</div>
<div class="t" style="left:1103.09px;top:609.69px;font-size:15.3px;font-weight:400;color:#1d2d3e;"><span style="display:inline-block;transform:scaleX(0.9);transform-origin:0 0">UAH</span></div>
<div class="a" style="left:28px;top:632.82px;width:1796px;height:27.52px;background:#eff1f2;"></div>
<div class="a" style="left:28px;top:659.24px;width:34px;height:1px;background:#a9b4be;"></div>
<div class="a" style="left:63px;top:659.24px;width:85px;height:1px;background:#a9b4be;"></div>
<div class="a" style="left:149px;top:659.24px;width:181px;height:1px;background:#a9b4be;"></div>
<div class="a" style="left:331px;top:659.24px;width:131px;height:1px;background:#a9b4be;"></div>
<div class="a" style="left:463px;top:659.24px;width:178px;height:1px;background:#a9b4be;"></div>
<div class="a" style="left:642px;top:659.24px;width:131px;height:1px;background:#a9b4be;"></div>
<div class="a" style="left:774px;top:659.24px;width:102px;height:1px;background:#a9b4be;"></div>
<div class="a" style="left:877px;top:659.24px;width:263px;height:1px;background:#a9b4be;"></div>
<div class="a" style="left:1141px;top:659.24px;width:87px;height:1px;background:#a9b4be;"></div>
<div class="a" style="left:1229px;top:659.24px;width:173px;height:1px;background:#a9b4be;"></div>
<div class="a" style="left:1403px;top:659.24px;width:142px;height:1px;background:#a9b4be;"></div>
<div class="a" style="left:1546px;top:659.24px;width:142px;height:1px;background:#a9b4be;"></div>
<div class="a" style="left:1689px;top:659.24px;width:135px;height:1px;background:#a9b4be;"></div>
<svg class="a" style="left:40px;top:638.32px" width="12" height="16" viewBox="0 0 12 16"><path d="M4.3 3.3 L8.1 7.2 L4.3 11.1" fill="none" stroke="#1d2d3e" stroke-width="1.2"/></svg>
<div class="t" style="left:65.77px;top:637.08px;font-size:15.4px;font-weight:400;color:#1d2d3e;">Рахун.головної книги: 16004000 - 10500000 Транспортні засоби</div>
<div class="t" style="right:823.70px;top:637.18px;font-size:15.3px;font-weight:400;color:#1d2d3e;">301 562,50</div>
<div class="t" style="left:1103.09px;top:637.18px;font-size:15.3px;font-weight:400;color:#1d2d3e;"><span style="display:inline-block;transform:scaleX(0.9);transform-origin:0 0">UAH</span></div>
<div class="a" style="left:28px;top:660.34px;width:1796px;height:27.52px;background:#eff1f2;"></div>
<div class="a" style="left:28px;top:686.76px;width:34px;height:1px;background:#a9b4be;"></div>
<div class="a" style="left:63px;top:686.76px;width:85px;height:1px;background:#a9b4be;"></div>
<div class="a" style="left:149px;top:686.76px;width:181px;height:1px;background:#a9b4be;"></div>
<div class="a" style="left:331px;top:686.76px;width:131px;height:1px;background:#a9b4be;"></div>
<div class="a" style="left:463px;top:686.76px;width:178px;height:1px;background:#a9b4be;"></div>
<div class="a" style="left:642px;top:686.76px;width:131px;height:1px;background:#a9b4be;"></div>
<div class="a" style="left:774px;top:686.76px;width:102px;height:1px;background:#a9b4be;"></div>
<div class="a" style="left:877px;top:686.76px;width:263px;height:1px;background:#a9b4be;"></div>
<div class="a" style="left:1141px;top:686.76px;width:87px;height:1px;background:#a9b4be;"></div>
<div class="a" style="left:1229px;top:686.76px;width:173px;height:1px;background:#a9b4be;"></div>
<div class="a" style="left:1403px;top:686.76px;width:142px;height:1px;background:#a9b4be;"></div>
<div class="a" style="left:1546px;top:686.76px;width:142px;height:1px;background:#a9b4be;"></div>
<div class="a" style="left:1689px;top:686.76px;width:135px;height:1px;background:#a9b4be;"></div>
<svg class="a" style="left:40px;top:665.84px" width="12" height="16" viewBox="0 0 12 16"><path d="M4.3 3.3 L8.1 7.2 L4.3 11.1" fill="none" stroke="#1d2d3e" stroke-width="1.2"/></svg>
<div class="t" style="left:65.77px;top:664.57px;font-size:15.4px;font-weight:400;color:#1d2d3e;">Рахун.головної книги: 16014000 - 15000000 Техн кліринг рахунок Надходж Основ засобу</div>
<div class="t" style="right:823.70px;top:664.67px;font-size:15.3px;font-weight:400;color:#1d2d3e;">0,00</div>
<div class="t" style="left:1103.09px;top:664.67px;font-size:15.3px;font-weight:400;color:#1d2d3e;"><span style="display:inline-block;transform:scaleX(0.9);transform-origin:0 0">UAH</span></div>
<div class="a" style="left:28px;top:687.86px;width:1796px;height:27.52px;background:#eff1f2;"></div>
<div class="a" style="left:28px;top:714.28px;width:34px;height:1px;background:#a9b4be;"></div>
<div class="a" style="left:63px;top:714.28px;width:85px;height:1px;background:#a9b4be;"></div>
<div class="a" style="left:149px;top:714.28px;width:181px;height:1px;background:#a9b4be;"></div>
<div class="a" style="left:331px;top:714.28px;width:131px;height:1px;background:#a9b4be;"></div>
<div class="a" style="left:463px;top:714.28px;width:178px;height:1px;background:#a9b4be;"></div>
<div class="a" style="left:642px;top:714.28px;width:131px;height:1px;background:#a9b4be;"></div>
<div class="a" style="left:774px;top:714.28px;width:102px;height:1px;background:#a9b4be;"></div>
<div class="a" style="left:877px;top:714.28px;width:263px;height:1px;background:#a9b4be;"></div>
<div class="a" style="left:1141px;top:714.28px;width:87px;height:1px;background:#a9b4be;"></div>
<div class="a" style="left:1229px;top:714.28px;width:173px;height:1px;background:#a9b4be;"></div>
<div class="a" style="left:1403px;top:714.28px;width:142px;height:1px;background:#a9b4be;"></div>
<div class="a" style="left:1546px;top:714.28px;width:142px;height:1px;background:#a9b4be;"></div>
<div class="a" style="left:1689px;top:714.28px;width:135px;height:1px;background:#a9b4be;"></div>
<svg class="a" style="left:40px;top:693.36px" width="12" height="16" viewBox="0 0 12 16"><path d="M4.3 3.3 L8.1 7.2 L4.3 11.1" fill="none" stroke="#1d2d3e" stroke-width="1.2"/></svg>
<div class="t" style="left:65.77px;top:692.06px;font-size:15.4px;font-weight:400;color:#1d2d3e;">Рахун.головної книги: 21100000 - 63101000 Розрахунки з вітчизняними постачальниками</div>
<div class="t" style="right:823.70px;top:692.16px;font-size:15.3px;font-weight:400;color:#1d2d3e;">-591 600,00</div>
<div class="t" style="left:1103.09px;top:692.16px;font-size:15.3px;font-weight:400;color:#1d2d3e;"><span style="display:inline-block;transform:scaleX(0.9);transform-origin:0 0">UAH</span></div>
<div class="a" style="left:28px;top:715.38px;width:1796px;height:27.52px;background:#eff1f2;"></div>
<div class="a" style="left:28px;top:741.80px;width:34px;height:1px;background:#a9b4be;"></div>
<div class="a" style="left:63px;top:741.80px;width:85px;height:1px;background:#a9b4be;"></div>
<div class="a" style="left:149px;top:741.80px;width:181px;height:1px;background:#a9b4be;"></div>
<div class="a" style="left:331px;top:741.80px;width:131px;height:1px;background:#a9b4be;"></div>
<div class="a" style="left:463px;top:741.80px;width:178px;height:1px;background:#a9b4be;"></div>
<div class="a" style="left:642px;top:741.80px;width:131px;height:1px;background:#a9b4be;"></div>
<div class="a" style="left:774px;top:741.80px;width:102px;height:1px;background:#a9b4be;"></div>
<div class="a" style="left:877px;top:741.80px;width:263px;height:1px;background:#a9b4be;"></div>
<div class="a" style="left:1141px;top:741.80px;width:87px;height:1px;background:#a9b4be;"></div>
<div class="a" style="left:1229px;top:741.80px;width:173px;height:1px;background:#a9b4be;"></div>
<div class="a" style="left:1403px;top:741.80px;width:142px;height:1px;background:#a9b4be;"></div>
<div class="a" style="left:1546px;top:741.80px;width:142px;height:1px;background:#a9b4be;"></div>
<div class="a" style="left:1689px;top:741.80px;width:135px;height:1px;background:#a9b4be;"></div>
<svg class="a" style="left:40px;top:720.88px" width="12" height="16" viewBox="0 0 12 16"><path d="M4.3 3.3 L8.1 7.2 L4.3 11.1" fill="none" stroke="#1d2d3e" stroke-width="1.2"/></svg>
<div class="t" style="left:65.77px;top:719.55px;font-size:15.4px;font-weight:400;color:#1d2d3e;">Рахун.головної книги: 21120000 - M2001010Надх.товарів / надходження рахунка-фактури</div>
<div class="t" style="right:823.70px;top:719.65px;font-size:15.3px;font-weight:400;color:#1d2d3e;">0,00</div>
<div class="t" style="left:1103.09px;top:719.65px;font-size:15.3px;font-weight:400;color:#1d2d3e;"><span style="display:inline-block;transform:scaleX(0.9);transform-origin:0 0">UAH</span></div>
<div class="a" style="left:28px;top:742.90px;width:1796px;height:27.52px;background:#eff1f2;"></div>
<div class="a" style="left:28px;top:769.32px;width:34px;height:1px;background:#a9b4be;"></div>
<div class="a" style="left:63px;top:769.32px;width:85px;height:1px;background:#a9b4be;"></div>
<div class="a" style="left:149px;top:769.32px;width:181px;height:1px;background:#a9b4be;"></div>
<div class="a" style="left:331px;top:769.32px;width:131px;height:1px;background:#a9b4be;"></div>
<div class="a" style="left:463px;top:769.32px;width:178px;height:1px;background:#a9b4be;"></div>
<div class="a" style="left:642px;top:769.32px;width:131px;height:1px;background:#a9b4be;"></div>
<div class="a" style="left:774px;top:769.32px;width:102px;height:1px;background:#a9b4be;"></div>
<div class="a" style="left:877px;top:769.32px;width:263px;height:1px;background:#a9b4be;"></div>
<div class="a" style="left:1141px;top:769.32px;width:87px;height:1px;background:#a9b4be;"></div>
<div class="a" style="left:1229px;top:769.32px;width:173px;height:1px;background:#a9b4be;"></div>
<div class="a" style="left:1403px;top:769.32px;width:142px;height:1px;background:#a9b4be;"></div>
<div class="a" style="left:1546px;top:769.32px;width:142px;height:1px;background:#a9b4be;"></div>
<div class="a" style="left:1689px;top:769.32px;width:135px;height:1px;background:#a9b4be;"></div>
<svg class="a" style="left:40px;top:748.40px" width="12" height="16" viewBox="0 0 12 16"><path d="M4.3 3.3 L8.1 7.2 L4.3 11.1" fill="none" stroke="#1d2d3e" stroke-width="1.2"/></svg>
<div class="t" style="left:65.77px;top:747.04px;font-size:15.4px;font-weight:400;color:#1d2d3e;">Рахун.головної книги: 21501000 - 66102000 Нарахована чиста заробітна плата</div>
<div class="t" style="right:823.70px;top:747.14px;font-size:15.3px;font-weight:400;color:#1d2d3e;">-1 500,00</div>
<div class="t" style="left:1103.09px;top:747.14px;font-size:15.3px;font-weight:400;color:#1d2d3e;"><span style="display:inline-block;transform:scaleX(0.9);transform-origin:0 0">UAH</span></div>
<div class="a" style="left:28px;top:770.42px;width:1796px;height:27.52px;background:#eff1f2;"></div>
<div class="a" style="left:28px;top:796.84px;width:34px;height:1px;background:#a9b4be;"></div>
<div class="a" style="left:63px;top:796.84px;width:85px;height:1px;background:#a9b4be;"></div>
<div class="a" style="left:149px;top:796.84px;width:181px;height:1px;background:#a9b4be;"></div>
<div class="a" style="left:331px;top:796.84px;width:131px;height:1px;background:#a9b4be;"></div>
<div class="a" style="left:463px;top:796.84px;width:178px;height:1px;background:#a9b4be;"></div>
<div class="a" style="left:642px;top:796.84px;width:131px;height:1px;background:#a9b4be;"></div>
<div class="a" style="left:774px;top:796.84px;width:102px;height:1px;background:#a9b4be;"></div>
<div class="a" style="left:877px;top:796.84px;width:263px;height:1px;background:#a9b4be;"></div>
<div class="a" style="left:1141px;top:796.84px;width:87px;height:1px;background:#a9b4be;"></div>
<div class="a" style="left:1229px;top:796.84px;width:173px;height:1px;background:#a9b4be;"></div>
<div class="a" style="left:1403px;top:796.84px;width:142px;height:1px;background:#a9b4be;"></div>
<div class="a" style="left:1546px;top:796.84px;width:142px;height:1px;background:#a9b4be;"></div>
<div class="a" style="left:1689px;top:796.84px;width:135px;height:1px;background:#a9b4be;"></div>
<svg class="a" style="left:40px;top:775.92px" width="12" height="16" viewBox="0 0 12 16"><path d="M4.3 3.3 L8.1 7.2 L4.3 11.1" fill="none" stroke="#1d2d3e" stroke-width="1.2"/></svg>
<div class="t" style="left:65.77px;top:774.53px;font-size:15.4px;font-weight:400;color:#1d2d3e;">Рахун.головної книги: 21501300 - 66103000 Плата за роботу у свята</div>
<div class="t" style="right:823.70px;top:774.63px;font-size:15.3px;font-weight:400;color:#1d2d3e;">-3 200,00</div>
<div class="t" style="left:1103.09px;top:774.63px;font-size:15.3px;font-weight:400;color:#1d2d3e;"><span style="display:inline-block;transform:scaleX(0.9);transform-origin:0 0">UAH</span></div>
<div class="a" style="left:28px;top:797.94px;width:1796px;height:27.52px;background:#eff1f2;"></div>
<svg class="a" style="left:40px;top:803.44px" width="12" height="16" viewBox="0 0 12 16"><path d="M4.3 3.3 L8.1 7.2 L4.3 11.1" fill="none" stroke="#1d2d3e" stroke-width="1.2"/></svg>
<div class="t" style="left:65.77px;top:802.02px;font-size:15.4px;font-weight:400;color:#1d2d3e;">Рахун.головної книги: 22000000 - 64102021 Вихідний податок (MWS)</div>
<div class="t" style="right:823.70px;top:802.12px;font-size:15.3px;font-weight:400;color:#1d2d3e;">-1 151 681,30</div>
<div class="t" style="left:1103.09px;top:802.12px;font-size:15.3px;font-weight:400;color:#1d2d3e;"><span style="display:inline-block;transform:scaleX(0.9);transform-origin:0 0">UAH</span></div>
</div>
<div class="a" style="left:28px;top:824px;width:34px;height:1px;background:#a9b4be;"></div>
<div class="a" style="left:63px;top:824px;width:1761px;height:2px;background:#8d969e;"></div>
<div class="t" style="right:823.00px;top:830.79px;font-size:15.3px;font-weight:400;color:#1d2d3e;-webkit-text-stroke:0.5px #1d2d3e;">0,00</div>
<div class="t" style="left:1103.19px;top:830.79px;font-size:15.3px;font-weight:400;color:#1d2d3e;-webkit-text-stroke:0.5px #1d2d3e;"><span style="display:inline-block;transform:scaleX(0.9);transform-origin:0 0">UAH</span></div>
<div class="a" style="left:28px;top:853px;width:1814px;height:1px;background:#a9b4be;"></div>
<svg class="a" style="left:67px;top:857px" width="8" height="11" viewBox="0 0 8 11"><path d="M6.2 1.5 L2 5.5 L6.2 9.5 Z" fill="#7b91a8"/></svg>
<div class="a" style="left:80px;top:856px;width:1555px;height:13px;background:#7b91a8;"></div>
<svg class="a" style="left:1811px;top:857px" width="8" height="11" viewBox="0 0 8 11"><path d="M1.8 1.5 L6 5.5 L1.8 9.5 Z" fill="#7b91a8"/></svg>
<div class="a" style="left:1824px;top:330px;width:18px;height:523px;background:#fafafa;border-left:1px solid #dcdcdc;box-sizing:border-box"></div>
<svg class="a" style="left:1829px;top:335px" width="10" height="8" viewBox="0 0 10 8"><path d="M1 6.2 L5 2 L9 6.2 Z" fill="#7b91a8"/></svg>
<div class="a" style="left:1827px;top:347px;width:13px;height:193px;background:#7b91a8;"></div>
<svg class="a" style="left:1829px;top:812px" width="10" height="8" viewBox="0 0 10 8"><path d="M1 1.8 L5 6 L9 1.8 Z" fill="#7b91a8"/></svg>
<div class="a" style="left:1790px;top:0;width:103px;height:879px;background:linear-gradient(to right, rgba(0,0,0,0) 0%, rgba(0,0,0,0.02) 45%, rgba(0,0,0,0.075) 78%, rgba(0,0,0,0.14) 100%);-webkit-mask-image:linear-gradient(to bottom, rgba(0,0,0,0.12) 0px, rgba(0,0,0,1) 130px);mask-image:linear-gradient(to bottom, rgba(0,0,0,0.12) 0px, rgba(0,0,0,1) 130px)"></div>
</body></html>
